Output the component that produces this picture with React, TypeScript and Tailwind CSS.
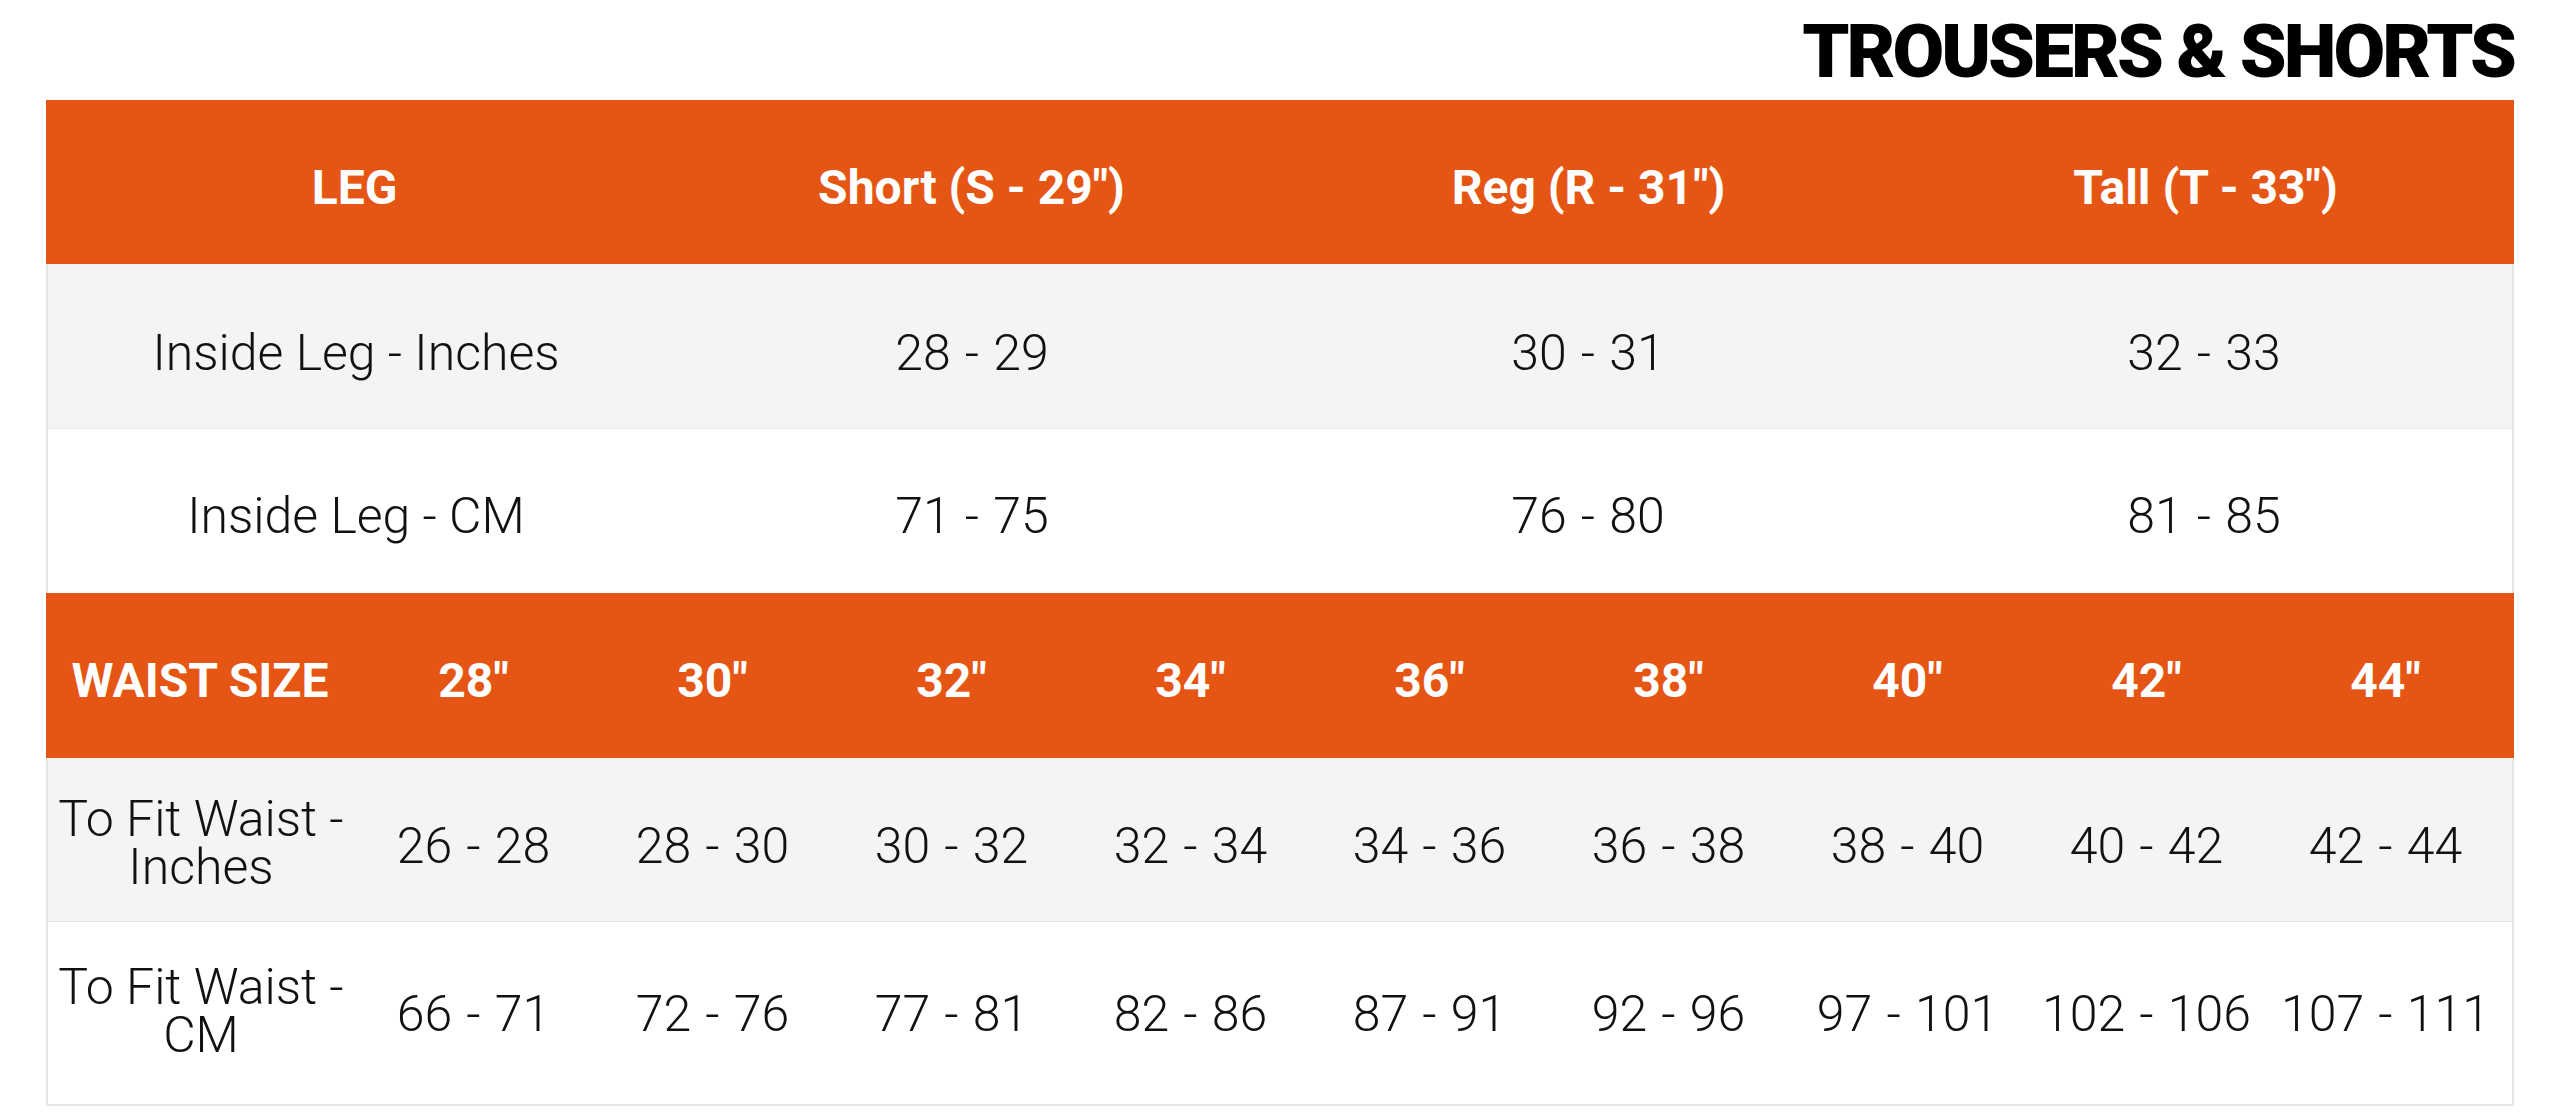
import React from "react";

const legCols = [
  { label: "LEG", inches: "Inside Leg - Inches", cm: "Inside Leg - CM" },
  { label: 'Short (S - 29")', inches: "28 - 29", cm: "71 - 75" },
  { label: 'Reg (R - 31")', inches: "30 - 31", cm: "76 - 80" },
  { label: 'Tall (T - 33")', inches: "32 - 33", cm: "81 - 85" },
];

const waist = [
  { size: '28"', inches: "26 - 28", cm: "66 - 71" },
  { size: '30"', inches: "28 - 30", cm: "72 - 76" },
  { size: '32"', inches: "30 - 32", cm: "77 - 81" },
  { size: '34"', inches: "32 - 34", cm: "82 - 86" },
  { size: '36"', inches: "34 - 36", cm: "87 - 91" },
  { size: '38"', inches: "36 - 38", cm: "92 - 96" },
  { size: '40"', inches: "38 - 40", cm: "97 - 101" },
  { size: '42"', inches: "40 - 42", cm: "102 - 106" },
  { size: '44"', inches: "42 - 44", cm: "107 - 111" },
];

export default function App() {
  return (
    <div className="min-h-screen w-full bg-white px-[46px] pt-[14px] font-['Roboto',_'Liberation_Sans',_sans-serif] text-[#111]">
      {/* Title */}
      <div className="mb-[11px] flex justify-end">
        <h1 className="text-[75px] font-black uppercase leading-[75px] tracking-[-0.04em] text-black">
          TROUSERS &amp; SHORTS
        </h1>
      </div>

      {/* Leg table */}
      <div className="grid h-[164px] grid-cols-4 bg-[#e55614] pt-[12px] text-[48px] font-bold text-white">
        {legCols.map((c) => (
          <div key={c.label} className="flex items-center justify-center">
            {c.label}
          </div>
        ))}
      </div>
      <div className="grid h-[165px] grid-cols-4 border-x-2 border-b border-[#e6e6e6] bg-[#f4f4f4] text-[50px] font-light">
        {legCols.map((c, i) => (
          <div
            key={c.label}
            className={`flex items-center justify-center pt-[14px] ${i > 0 ? "[word-spacing:2px]" : ""}`}
          >
            {c.inches}
          </div>
        ))}
      </div>
      <div className="grid h-[164px] grid-cols-4 border-x-2 border-[#e6e6e6] bg-white text-[50px] font-light">
        {legCols.map((c, i) => (
          <div
            key={c.label}
            className={`flex items-center justify-center pt-[10px] ${i > 0 ? "[word-spacing:2px]" : ""}`}
          >
            {c.cm}
          </div>
        ))}
      </div>

      {/* Waist table */}
      <div className="grid h-[165px] grid-cols-[308px_repeat(9,239px)] bg-[#e55614] pt-[10px] text-[48px] font-bold text-white">
        <div className="flex items-center justify-center">WAIST SIZE</div>
        {waist.map((w) => (
          <div key={w.size} className="flex items-center justify-center">
            {w.size}
          </div>
        ))}
      </div>
      <div className="grid h-[164px] grid-cols-[306px_repeat(9,239px)] border-x-2 border-b border-[#e6e6e6] bg-[#f4f4f4] text-[50px] font-light">
        <div className="flex items-center justify-center pt-[6px] text-center leading-[48px]">
          To Fit Waist -<br />
          Inches
        </div>
        {waist.map((w) => (
          <div key={w.size} className="flex items-center justify-center pt-[14px] [word-spacing:2px]">
            {w.inches}
          </div>
        ))}
      </div>
      <div className="grid h-[184px] grid-cols-[306px_repeat(9,239px)] border-x-2 border-b-2 border-[#e6e6e6] bg-white text-[50px] font-light">
        <div className="flex items-center justify-center pb-[4px] text-center leading-[48px]">
          To Fit Waist -<br />
          CM
        </div>
        {waist.map((w) => (
          <div key={w.size} className="flex items-center justify-center pt-[2px] [word-spacing:2px]">
            {w.cm}
          </div>
        ))}
      </div>
    </div>
  );
}
